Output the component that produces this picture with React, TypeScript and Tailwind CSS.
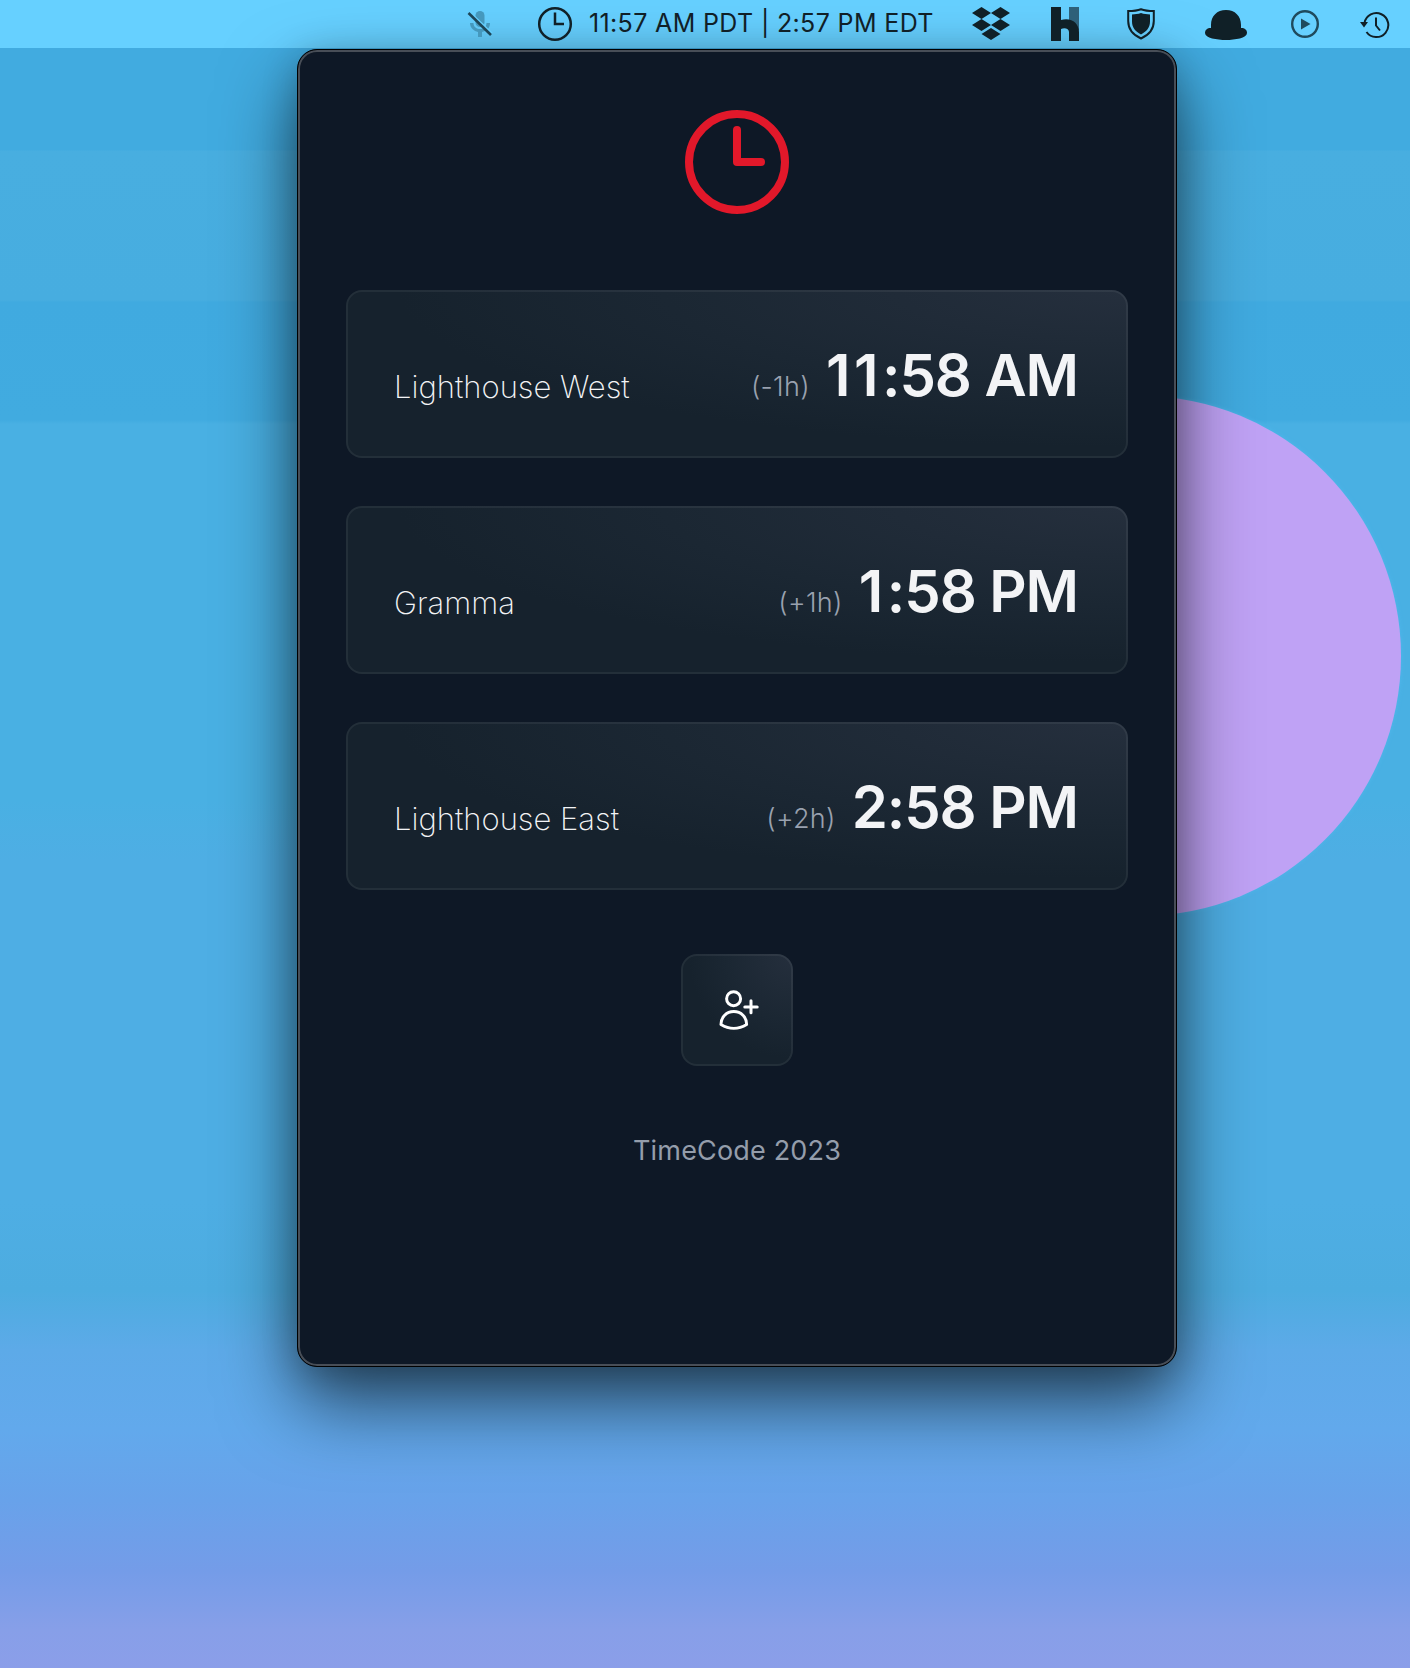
import React from "react";

const zones = [
  { name: "Lighthouse West", offset: "(-1h)", ones: "11", rest: ":58 AM" },
  { name: "Gramma", offset: "(+1h)", ones: "1", rest: ":58 PM" },
  { name: "Lighthouse East", offset: "(+2h)", ones: "", rest: "2:58 PM" },
];

function MenuBar() {
  return (
    <header className="flex h-12 items-center bg-[#66d0ff] pl-[466px] text-[#102027]">
      <svg width="28" height="28" viewBox="0 0 28 28" className="mt-px shrink-0">
        <g fill="#4598bd">
          <rect x="9.5" y="0" width="9" height="16" rx="4.5" />
          <path d="M4 12h3.500c0 8 13 8 13 0H24c0 6-4 8-8 9v5h-4v-5c-4-1-8-4-8-9z" />
        </g>
        <path d="M3.500 1 26 22.500" stroke="#66d0ff" strokeWidth="2" />
        <path d="M2.500 2 25 24" stroke="#1d4557" strokeWidth="2.600" />
      </svg>
      <svg width="36" height="36" viewBox="0 0 36 36" fill="none" stroke="currentColor" strokeWidth="2.500" className="ml-[43px] shrink-0">
        <circle cx="18" cy="18" r="15.800" />
        <path d="M18 6.500V18h9" />
      </svg>
      <span className="-mt-0.5 ml-4 w-[346px] whitespace-nowrap text-[25px] leading-none tracking-[0.36px]">11:57 AM PDT | 2:57 PM EDT</span>
      <svg width="38" height="34" viewBox="0 0 38 34" fill="currentColor" className="ml-[37px] shrink-0">
        <path d="M9.500 0 19 6 9.500 12 0 6zM28.500 0 38 6 28.500 12 19 6zM9.500 12 19 18 9.500 24 0 18zM28.500 12 38 18 28.500 24 19 18zM19 21l9.500 6-9.500 6-9.500-6z" />
      </svg>
      <svg width="28" height="34" viewBox="0 0 28 34" className="ml-[41px] shrink-0">
        <path d="M18 0h10v24L18 14z" fill="#2e6079" />
        <path d="M0 0h10v13c10-3 18 3 18 12v9H18v-9c0-3-4-5-8-3v12H0z" fill="#102027" />
      </svg>
      <svg width="28" height="32" viewBox="0 0 28 32" className="ml-[48px] shrink-0">
        <path d="M14 1.200c4 1.500 8 1.800 12.800 1.800v10c0 8-5 14-12.800 17.500C6.200 27 1.200 21 1.200 13V3C6 3 10 2.700 14 1.200z" fill="none" stroke="#102027" strokeWidth="2" />
        <path d="M14 5c3 1 6 1.400 9 1.400v7c0 6-3.500 10-9 13-5.500-3-9-7-9-13v-7c3 0 6-.4 9-1.400z" fill="#102027" />
      </svg>
      <svg width="42" height="30" viewBox="0 0 42 30" fill="currentColor" className="ml-[50px] mt-0.5 shrink-0">
        <path d="M6 18V15C6 6 12 0 21 0s15 6 15 15v3c4 0 6 2 6 5 0 5-12 7-21 7S0 28 0 23c0-3 2-5 6-5z" />
      </svg>
      <svg width="28" height="28" viewBox="0 0 28 28" className="ml-[44px] shrink-0">
        <circle cx="14" cy="14" r="12.800" fill="none" stroke="#1f4a5d" strokeWidth="2.400" />
        <path d="M10 8.500v11L19.500 14z" fill="#1f4a5d" />
      </svg>
      <svg width="30" height="28" viewBox="0 0 30 28" fill="none" stroke="currentColor" strokeWidth="2" className="ml-[41px] mt-0.5 shrink-0">
        <path d="M4.500 12A12 12 0 1 1 6.500 21" />
        <path d="M0 11h8l-4 5.500z" fill="currentColor" stroke="none" />
        <path d="M16 6.500v8l4 5" />
      </svg>
    </header>
  );
}

export default function App() {
  return (
    <div className="relative h-[1668px] w-[1410px] overflow-hidden bg-[linear-gradient(180deg,#41abe0_0px,#41abe0_150px,#48aee0_151px,#47ade0_300px,#40aae0_302px,#41abe0_420px,#49b0e3_424px,#49b0e3_800px,#4eaee4_860px,#4eaee4_1200px,#4dace0_1290px,#5daae8_1350px,#62a9ec_1430px,#68a2ea_1500px,#749ce8_1570px,#879fe8_1630px,#8b9ee9_1668px)] font-['Inter',sans-serif]">
      <div className="absolute left-[878px] top-[396px] h-[520px] w-[523px] rounded-full bg-[#bfa2f5] shadow-[0_0_4px_#4fb8ec]" />
      <div className="relative">
        <MenuBar />
        <main className="ml-[297px] mt-px flex h-[1318px] w-[880px] flex-col items-center rounded-[20px] border border-black bg-[#0e1826] pt-12 shadow-[inset_0_0_0_2px_#484e57,0_36px_76px_rgba(0,0,0,0.6),0_6px_36px_rgba(0,0,0,0.2)]">
          <svg width="128" height="128" viewBox="0 0 24 24" fill="none" stroke="#e2182a" strokeWidth="1.5" strokeLinecap="round" strokeLinejoin="round">
            <path d="M12 6v6h4.500m4.500 0a9 9 0 11-18 0 9 9 0 0118 0z" />
          </svg>
          <section className="mt-16 flex w-[782px] flex-col gap-12">
            {zones.map((z) => (
              <article key={z.name} className="flex h-[168px] items-baseline rounded-2xl border-2 border-white/[0.06] bg-[radial-gradient(ellipse_at_top_right,#252f3d_0%,#1b2733_42%,#16222d_66%)] bg-origin-border pl-[46px] pr-12 pt-[45px]">
                <span className="translate-y-0.5 text-[31px] font-extralight text-gray-100">{z.name}</span>
                <span className="ml-auto text-[27px] font-light tracking-[0.3px] text-gray-400">{z.offset}</span>
                <span className="ml-4 text-[58px] font-semibold leading-[76px] tracking-[-1.07px] text-gray-100">
                  {z.ones && <span className="tracking-[3.5px]">{z.ones}</span>}
                  {z.rest}
                </span>
              </article>
            ))}
          </section>
          <button className="mt-16 flex size-28 items-center justify-center rounded-2xl border-2 border-white/[0.06] bg-[radial-gradient(ellipse_at_top_right,#252f3d_0%,#1b2733_42%,#16222d_66%)] bg-origin-border">
            <svg width="48" height="48" viewBox="713 986 48 48" fill="none" stroke="white" strokeWidth="3" strokeLinecap="round" strokeLinejoin="round">
              <circle cx="733.6" cy="998.700" r="7" />
              <path d="M751 1000.800v12M744.800 1007h12.400" />
              <path d="M721 1024.500c0-7.500 5.500-13 12.800-13s12.800 5.500 12.800 13c-8 5-17.600 5-25.600 0z" />
            </svg>
          </button>
          <footer className="mt-[65px] text-[27px] tracking-[0.17px] text-[#949dab]">TimeCode 2023</footer>
        </main>
      </div>
    </div>
  );
}
